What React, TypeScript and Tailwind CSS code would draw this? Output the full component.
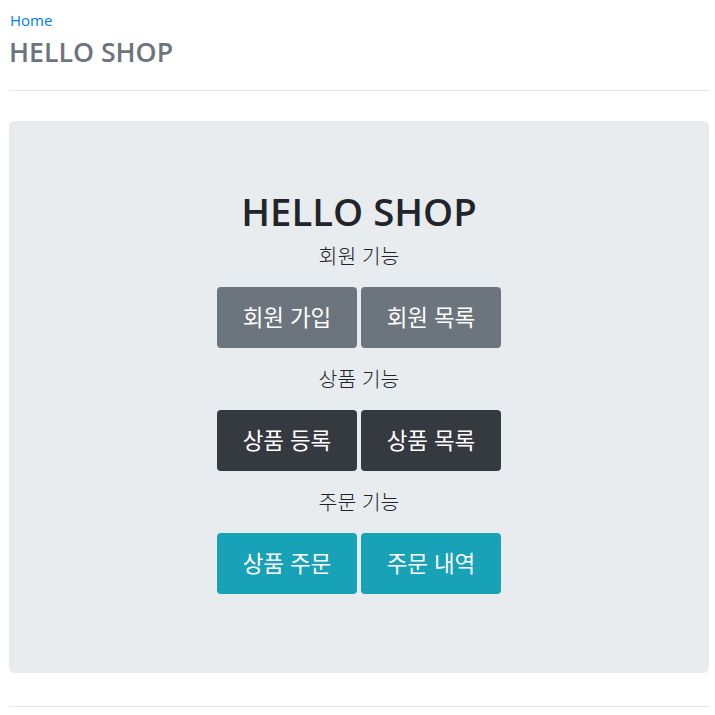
import React from "react";

const groups = [
  { label: "회원 기능", cls: "bg-[#6c757d]", items: ["회원 가입", "회원 목록"] },
  { label: "상품 기능", cls: "bg-[#343a40]", items: ["상품 등록", "상품 목록"] },
  { label: "주문 기능", cls: "bg-[#17a2b8]", items: ["상품 주문", "주문 내역"] },
];

export default function App() {
  return (
    <div
      className="min-h-[715px] bg-white pl-[9px] pr-[6px]"
      style={{ fontFamily: '"Open Sans", "Noto Sans CJK KR", sans-serif' }}
    >
      <div className="pt-[10px]">
        <a className="block pl-px text-[15px] leading-[20px] text-[#007bff]">Home</a>
        <h3 className="mt-[6px] text-[26.7px] leading-[32px] font-semibold text-[#6c757d]">HELLO SHOP</h3>
      </div>
      <div className="mt-[22px] border-t border-[#e6e6e6]" />
      <div className="mt-[30px] rounded-[5px] bg-[#e9ecef] pt-[66px] pb-[79px] text-center text-[#212529]">
        <h1 className="text-[38.3px] leading-[48px] font-semibold">HELLO SHOP</h1>
        <div className="mt-[9px] flex flex-col">
          {groups.map((g, i) => (
            <div key={g.label} className={i > 0 ? "mt-[19px]" : ""}>
              <p className="text-[20.5px] leading-[24px] font-light">{g.label}</p>
              <div className="mt-[19px] flex justify-center gap-[4px]">
                {g.items.map((t) => (
                  <button
                    key={t}
                    className={`h-[61px] w-[140px] rounded-[4px] text-[22.5px] text-white ${g.cls}`}
                  >
                    {t}
                  </button>
                ))}
              </div>
            </div>
          ))}
        </div>
      </div>
      <div className="mt-[33px] border-t border-[#e6e6e6]" />
    </div>
  );
}
